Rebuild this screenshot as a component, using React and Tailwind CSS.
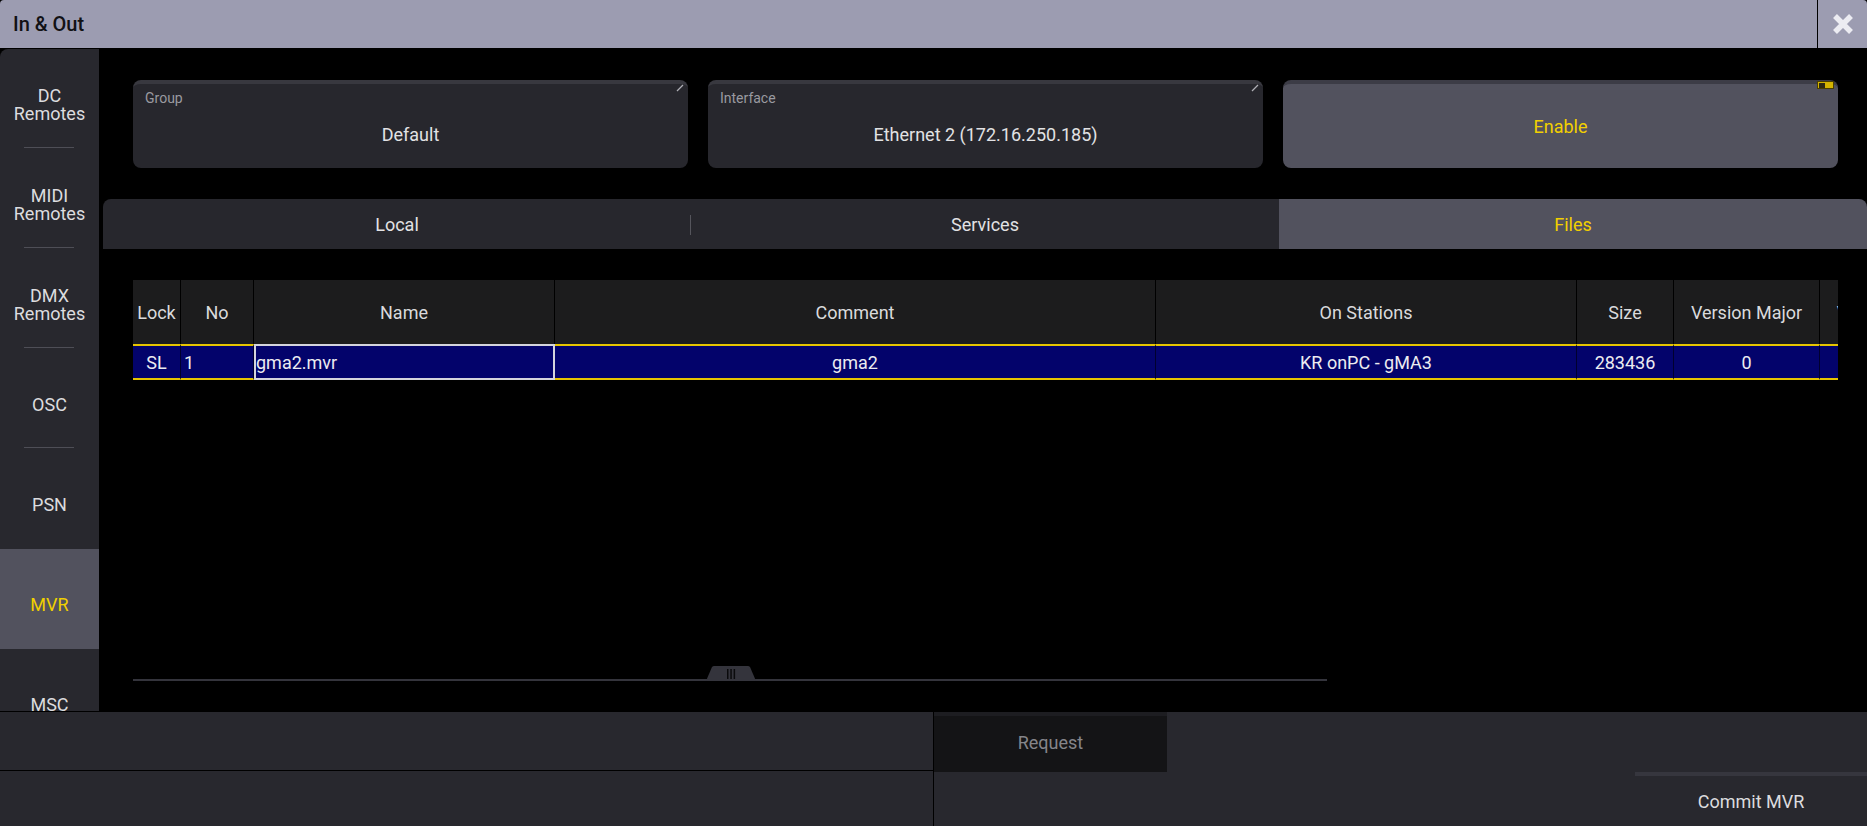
import React from 'react'

const sideItems = [
  { lines: ['DC', 'Remotes'], sep: true },
  { lines: ['MIDI', 'Remotes'], sep: true },
  { lines: ['DMX', 'Remotes'], sep: true },
  { lines: ['OSC'], sep: true },
  { lines: ['PSN'] },
  { lines: ['MVR'], active: true },
  { lines: ['MSC'] },
]

const columns = [
  { title: 'Lock', w: 'w-[48px]', value: 'SL', align: 'justify-center' },
  { title: 'No', w: 'w-[73px]', value: '1', align: 'justify-start pl-[3px]' },
  { title: 'Name', w: 'w-[301px]', value: 'gma2.mvr', align: 'justify-start', selected: true },
  { title: 'Comment', w: 'w-[601px]', value: 'gma2', align: 'justify-center' },
  { title: 'On Stations', w: 'w-[421px]', value: 'KR onPC - gMA3', align: 'justify-center' },
  { title: 'Size', w: 'w-[97px]', value: '283436', align: 'justify-center' },
  { title: 'Version Major', w: 'w-[146px]', value: '0', align: 'justify-center' },
  { title: 'Version Minor', w: 'w-[146px]', value: '1', align: 'justify-center' },
]

function EditMark() {
  return (
    <svg className="absolute right-[4px] top-[0px]" width="8" height="8" viewBox="0 0 8 8">
      <line x1="1" y1="7" x2="7" y2="1" stroke="#b0b0b6" strokeWidth="1.3" />
    </svg>
  )
}

function FieldButton({ label, value }) {
  return (
    <div className="relative h-[88px] rounded-[8px] bg-[#27272d] border-t-[4px] border-[#38383f] flex flex-col">
      <EditMark />
      <div className="pl-[12px] pt-[6px] text-[14px] leading-[16px] text-[#9a9aa0]">{label}</div>
      <div className="flex-1 flex items-center justify-center pb-[5px] text-[18px] text-[#e2e2e4]">{value}</div>
    </div>
  )
}

export default function App() {
  return (
    <div className="w-[1867px] h-[826px] bg-black flex flex-col overflow-hidden font-['Roboto',sans-serif]">
      {/* title bar */}
      <div className="h-[48px] flex bg-[#9c9cb1] rounded-t-[4px]">
        <div className="flex-1 flex items-center pl-[13px] text-[20px] font-medium text-[#111114]">In &amp; Out</div>
        <div className="w-[50px] border-l border-black flex items-center justify-center">
          <svg width="22" height="22" viewBox="0 0 22 22">
            <path d="M3 3 L19 19 M19 3 L3 19" stroke="#ececf2" strokeWidth="5.5" strokeLinecap="butt" />
          </svg>
        </div>
      </div>

      <div className="mt-px h-[662px] flex">
        {/* left menu */}
        <div className="w-[99px] bg-[#28282e] rounded-tl-[8px] overflow-hidden flex flex-col">
          {sideItems.map((item, i) => (
            <div
              key={i}
              className={`relative h-[100px] shrink-0 flex flex-col items-center justify-center pt-[12px] text-[18px] leading-[18px] ${item.active ? 'bg-[#52525e] text-[#f0d000]' : 'text-[#dcdcdf]'}`}
            >
              {item.lines.map((l) => (
                <span key={l}>{l}</span>
              ))}
              {item.sep && <div className="absolute bottom-[1px] left-[24px] w-[50px] h-px bg-[#4e4e56]" />}
            </div>
          ))}
        </div>

        {/* main */}
        <div className="flex-1 flex flex-col">
          <div className="mt-[31px] pl-[34px] pr-[29px] grid grid-cols-3 gap-[20px]">
            <FieldButton label="Group" value="Default" />
            <FieldButton label="Interface" value="Ethernet 2 (172.16.250.185)" />
            <div className="relative h-[88px] rounded-[8px] bg-[#52525e] border-t-[4px] border-[#3c3c46] flex items-center justify-center text-[18px] text-[#f2d000]">
              <div className="absolute right-[4px] top-[-3px] w-[17px] h-[8px] bg-[#d4b400] border border-[#4a3e00] flex items-center pl-[1px]">
                <div className="w-[6px] h-[5px] bg-[#2e2a14]" />
              </div>
              Enable
            </div>
          </div>

          {/* tabs */}
          <div className="mt-[31px] ml-[4px] h-[50px] flex rounded-t-[8px] overflow-hidden text-[18px]">
            <div className="flex-1 bg-[#27272d] flex items-center justify-center text-[#e2e2e4] relative">
              Local
              <div className="absolute right-0 top-[16px] h-[20px] w-px bg-[#55555c]" />
            </div>
            <div className="flex-1 bg-[#27272d] flex items-center justify-center text-[#e2e2e4]">Services</div>
            <div className="flex-1 bg-[#52525e] flex items-center justify-center text-[#f2d000]">Files</div>
          </div>

          {/* files table */}
          <div className="mt-[31px] ml-[34px] w-[1705px] overflow-hidden text-[18px]">
            <div className="flex h-[64px] w-max">
              {columns.map((c) => (
                <div key={c.title} className={`${c.w} shrink-0 bg-[#1c1c1d] border-r border-black flex items-center justify-center text-[#dadadc] whitespace-nowrap`}>
                  {c.title}
                </div>
              ))}
            </div>
            <div className="flex h-[36px] w-max">
              {columns.map((c) => (
                <div
                  key={c.title}
                  className={`${c.w} shrink-0 bg-[#03036b] flex items-center text-[#ececf0] ${c.align} ${c.selected ? 'border-2 border-[#d4d4dc]' : 'border-y-2 border-y-[#e6c400] border-r border-r-[#00002e]'}`}
                >
                  {c.value}
                </div>
              ))}
            </div>
          </div>

          <div className="flex-1" />

          {/* splitter */}
          <div className="ml-[34px] w-[1194px] mb-[30px] relative h-[2px] bg-[#34343c]">
            <svg className="absolute left-[573px] bottom-0" width="50" height="15" viewBox="0 0 50 15">
              <path d="M0 15 L6 1 Q7 0 8 0 L42 0 Q43 0 44 1 L50 15 Z" fill="#34343c" />
              <rect x="21" y="3" width="1.5" height="10" fill="#0a0a0c" />
              <rect x="24.3" y="3" width="1.5" height="10" fill="#0a0a0c" />
              <rect x="27.6" y="3" width="1.5" height="10" fill="#0a0a0c" />
            </svg>
          </div>
        </div>
      </div>

      {/* bottom bar */}
      <div className="mt-px h-[114px] flex text-[18px]">
        <div className="w-[934px] flex flex-col border-r border-black">
          <div className="h-[59px] bg-[#28282e] border-b border-black" />
          <div className="flex-1 bg-[#28282e]" />
        </div>
        <div className="flex-1 flex flex-col bg-[#28282e]">
          <div className="h-[60px] flex">
            <div className="w-[233px] bg-[#141416] border-t-[4px] border-[#1d1d21] flex items-center justify-center pb-[4px] text-[#85858a]">
              Request
            </div>
          </div>
          <div className="flex-1 flex justify-end">
            <div className="w-[232px] border-t-[4px] border-[#36363e] flex items-center justify-center text-[#dcdcdf]">
              Commit MVR
            </div>
          </div>
        </div>
      </div>
    </div>
  )
}
